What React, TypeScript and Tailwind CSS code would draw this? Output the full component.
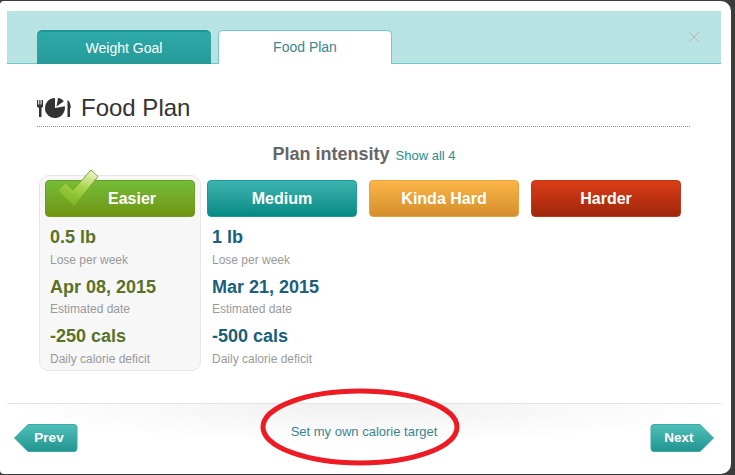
const font = { fontFamily: '"Liberation Sans", Arial, sans-serif' };

type Plan = {
  name: string;
  btn: string;
  value: string;
  rate: string;
  date: string;
  cals: string;
  selected?: boolean;
};

const plans: Plan[] = [
  { name: "Easier", btn: "border-[#6f9a1c] bg-gradient-to-b from-[#74bd38] to-[#6f950f]", value: "text-[#5a7226]", rate: "0.5 lb", date: "Apr 08, 2015", cals: "-250 cals", selected: true },
  { name: "Medium", btn: "border-[#1f9a96] bg-gradient-to-b from-[#3bb4af] to-[#008a85]", value: "text-[#1a5f7c]", rate: "1 lb", date: "Mar 21, 2015", cals: "-500 cals" },
  { name: "Kinda Hard", btn: "border-[#e8a33c] bg-gradient-to-b from-[#fdb548] to-[#d38f2c]", value: "", rate: "", date: "", cals: "" },
  { name: "Harder", btn: "border-[#b83a18] bg-gradient-to-b from-[#dc3d17] to-[#9f270b]", value: "", rate: "", date: "", cals: "" },
];

function FoodIcon() {
  return (
    <svg width="35" height="22" viewBox="0 0 35 22" className="shrink-0">
      <g fill="#333333">
        <path d="M0 3h1.200v4.500h1.100V3h1.200v4.500h1.100V3H6v6c0 1-.6 1.500-1.500 1.800V20H2V10.800C.8 10.500 0 10 0 9z" />
        <path d="M18 11V1A10 10 0 1 0 27.800 9.300z" />
        <path d="M19.500 9.500 21.060.64A9 9 0 0 1 26.870 4.340z" />
        <path d="M30.500 3c2 1 3.300 4 3.300 8H33V20h-2.500z" />
      </g>
    </svg>
  );
}

function Check() {
  return (
    <svg width="44" height="39" viewBox="0 0 44 39" className="absolute left-[56px] top-[169px]">
      <defs>
        <linearGradient id="chk" x1="0.85" y1="0" x2="0.4" y2="1">
          <stop offset="0" stopColor="#eef6d4" />
          <stop offset="0.5" stopColor="#a7d24a" />
          <stop offset="1" stopColor="#76b51e" />
        </linearGradient>
      </defs>
      <path d="M1.500 21.500 9.500 14 17 21 35 1l7 6.500L18 37.500z" fill="url(#chk)" stroke="#7ea62a" strokeWidth="1" strokeLinejoin="round" />
    </svg>
  );
}

function PlanColumn({ plan }: { plan: Plan }) {
  return (
    <div className={`w-[162px] h-[196px] rounded-[10px] border px-[5px] pt-[4px] ${plan.selected ? "border-[#e6e6e6] bg-[#f7f7f7]" : "border-transparent"}`}>
      <div className={`h-[37px] rounded-[4px] border flex items-center justify-center text-white font-bold text-[16px] ${plan.btn} ${plan.selected ? "pl-[24px]" : ""}`}>
        {plan.name}
      </div>
      {plan.rate && (
        <div className="pl-[5px] pt-[10px]">
          <div className={`text-[18px] leading-[21px] font-bold ${plan.value}`}>{plan.rate}</div>
          <div className="text-[12px] leading-[14px] text-[#999999] mt-[5px]">Lose per week</div>
          <div className={`text-[18px] leading-[21px] font-bold mt-[10px] ${plan.value}`}>{plan.date}</div>
          <div className="text-[12px] leading-[14px] text-[#999999] mt-[4px]">Estimated date</div>
          <div className={`text-[18px] leading-[21px] font-bold mt-[10px] ${plan.value}`}>{plan.cals}</div>
          <div className="text-[12px] leading-[14px] text-[#999999] mt-[5px]">Daily calorie deficit</div>
        </div>
      )}
    </div>
  );
}

function NavButton({ label, dir }: { label: string; dir: "prev" | "next" }) {
  const d =
    dir === "prev"
      ? "M0.500 14 14 0.500H60a3 3 0 0 1 3 3V24.500a3 3 0 0 1-3 3H14z"
      : "M50 0.500 63.500 14 50 27.500H4a3 3 0 0 1-3-3V3.500a3 3 0 0 1 3-3z";
  return (
    <div className="relative w-[64px] h-[28px] flex items-center justify-center pt-[1px]">
      <svg width="64" height="28" viewBox="0 0 64 28" className="absolute inset-0">
        <defs>
          <linearGradient id={`nav-${dir}`} x1="0" y1="0" x2="0" y2="1">
            <stop offset="0" stopColor="#4fc0b9" />
            <stop offset="1" stopColor="#229490" />
          </linearGradient>
        </defs>
        <path d={d} fill={`url(#nav-${dir})`} stroke="#3aa9a5" strokeWidth="1" />
      </svg>
      <span className={`relative text-white font-bold text-[13.5px] ${dir === "prev" ? "pl-[6px]" : "pr-[6px]"}`}>{label}</span>
    </div>
  );
}

export default function App() {
  return (
    <div className="relative w-[735px] h-[475px] overflow-hidden bg-[#3c3c3c] pt-[1px] pb-[1px] pr-[4px]" style={font}>
      <div className="h-full bg-white rounded-tr-[10px] rounded-br-[10px] rounded-bl-[4px] rounded-tl-[4px] pt-[10px] px-[7px] pr-[10px] flex flex-col">
        <div className="relative h-[53px] shrink-0 bg-[#b7e3e3] border-b border-[#74c8c8] flex items-end pl-[30px] gap-[7px]">
          <div className="w-[174px] h-[34px] -mb-px rounded-t-[5px] border-t-2 border-[#1f9595] bg-gradient-to-b from-[#2ea9a9] to-[#279a9a] text-white text-[14px] flex items-center justify-center">
            Weight Goal
          </div>
          <div className="w-[174px] h-[34px] -mb-px rounded-t-[5px] border border-b-0 border-[#74c8c8] bg-white text-[#3d8590] text-[14px] flex items-center justify-center">
            Food Plan
          </div>
          <svg width="12" height="12" viewBox="0 0 12 12" className="absolute right-[21px] top-[20px]">
            <path d="M1 1l10 10M11 1 1 11" stroke="#bdb5b5" strokeWidth="1" />
          </svg>
        </div>

        <div className="pl-[30px] pr-[31px]">
          <div className="h-[63px] border-b border-dotted border-[#8a8a8a] flex items-center gap-[9px] pt-[28px] pb-[3px]">
            <FoodIcon />
            <div className="text-[24px] leading-[28px] text-[#333333]">Food Plan</div>
          </div>
          <div className="flex items-baseline justify-center gap-[6px] mt-[17px] h-[21px] pl-[1px]">
            <span className="text-[18px] leading-[21px] font-bold text-[#666666]">Plan intensity</span>
            <span className="text-[13px] leading-[15px] text-[#2b8b8f]">Show all 4</span>
          </div>
          <div className="flex mt-[10px] ml-[2px]">
            {plans.map((p) => (
              <PlanColumn key={p.name} plan={p} />
            ))}
          </div>
        </div>

        <div className="mt-[32px] h-[70px] border-t border-[#e4e4e4] bg-[radial-gradient(ellipse_360px_40px_at_50%_0%,#f0f0f0,#ffffff)] flex items-start justify-between pl-[7px] pr-[7px] pt-[20px]">
          <NavButton label="Prev" dir="prev" />
          <div className="text-[13px] leading-[15px] text-[#3a8591]">Set my own calorie target</div>
          <NavButton label="Next" dir="next" />
        </div>
      </div>

      <Check />

      <svg width="206" height="84" viewBox="0 0 206 84" className="absolute left-[257px] top-[385px]">
        <ellipse cx="103" cy="42" rx="97" ry="36" fill="none" stroke="#ed1c24" strokeWidth="5" />
      </svg>
    </div>
  );
}
